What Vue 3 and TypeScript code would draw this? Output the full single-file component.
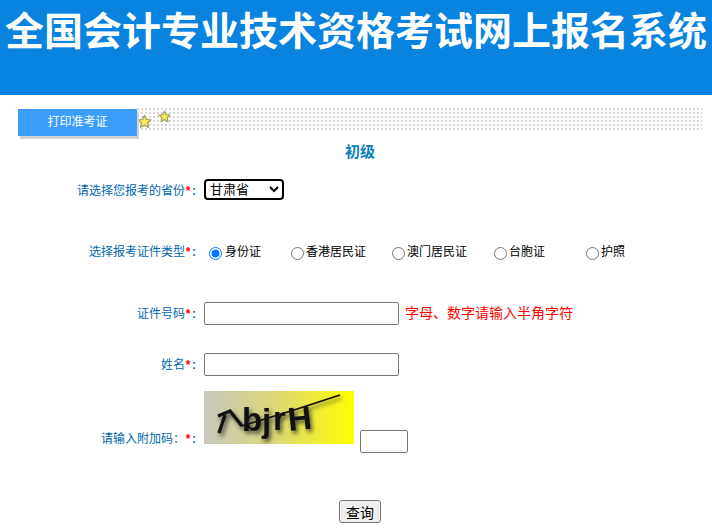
<script setup lang="ts">
import { ref } from 'vue'

const idTypes = [
  { label: '身份证', width: 81 },
  { label: '香港居民证', width: 101 },
  { label: '澳门居民证', width: 102 },
  { label: '台胞证', width: 92 },
  { label: '护照', width: 60 },
]
const idType = ref('身份证')
const province = ref('甘肃省')
</script>

<template>
  <div class="page">
    <header class="banner">
      <h1>全国会计专业技术资格考试网上报名系统</h1>
    </header>

    <nav class="toolbar">
      <div class="tab">打印准考证</div>
      <div class="dots">
        <svg class="star star-a" viewBox="0 0 24 24" width="15" height="15">
          <path d="M12 2l3 6.6 7.2.8-5.300 4.900 1.500 7.100L12 17.800l-6.400 3.600 1.500-7.100L1.800 9.400 9 8.600z" fill="#f9ec55" stroke="#a9a66a" stroke-width="2.200" stroke-linejoin="round" />
        </svg>
        <svg class="star star-b" viewBox="0 0 24 24" width="13" height="13">
          <path d="M12 2l3 6.6 7.2.8-5.300 4.900 1.500 7.100L12 17.800l-6.400 3.600 1.500-7.100L1.800 9.400 9 8.600z" fill="#f9ec55" stroke="#a9a66a" stroke-width="2.500" stroke-linejoin="round" />
        </svg>
      </div>
    </nav>

    <h2 class="level">初级</h2>

    <form class="form" @submit.prevent>
      <div class="row row-province">
        <label class="label">请选择您报考的省份<b>*</b><i>:</i></label>
        <select v-model="province" class="select">
          <option>甘肃省</option>
        </select>
      </div>

      <div class="row row-type">
        <label class="label">选择报考证件类型<b>*</b><i>:</i></label>
        <div class="radios">
          <label v-for="t in idTypes" :key="t.label" class="radio" :style="{ width: t.width + 'px' }">
            <input v-model="idType" type="radio" :value="t.label" />
            <span>{{ t.label }}</span>
          </label>
        </div>
      </div>

      <div class="row row-id">
        <label class="label">证件号码<b>*</b><i>:</i></label>
        <input class="text wide" type="text" />
        <span class="hint">字母、数字请输入半角字符</span>
      </div>

      <div class="row row-name">
        <label class="label">姓名<b>*</b><i>:</i></label>
        <input class="text wide" type="text" />
      </div>

      <div class="row row-code">
        <label class="label code-label">请输入附加码：<b>*</b><i>:</i></label>
        <svg class="captcha" viewBox="0 0 150 53" width="150" height="53" role="img" aria-label="附加码">
          <defs>
            <linearGradient id="cg" x1="0" x2="1" y1="0" y2="0">
              <stop offset="0" stop-color="#c8c8c0" />
              <stop offset="0.5" stop-color="#dcd970" />
              <stop offset="1" stop-color="#ffff00" />
            </linearGradient>
          </defs>
          <rect width="150" height="53" fill="url(#cg)" />
          <g class="cap-ink">
            <text class="cap" x="38 58 69 85" y="40 41 39 40" rotate="0 0 0 -6">bjrH</text>
            <path d="M15 42L21 24M14 25L26 20 38 35" fill="none" stroke="#111" stroke-width="3.400" />
            <path d="M38 35L90 19 136 4" fill="none" stroke="#111" stroke-width="1.800" />
          </g>
        </svg>
        <input class="text code" type="text" />
      </div>

      <div class="row-submit">
        <button class="submit" type="submit">查询</button>
      </div>
    </form>
  </div>
</template>

<style>
html,
body {
  margin: 0;
  background: #fff;
}
</style>

<style scoped>
.page {
  width: 712px;
  height: 530px;
  overflow: hidden;
  font-family: "Liberation Sans", "Noto Sans CJK SC", sans-serif;
  font-size: 12px;
  color: #000;
  position: relative;
}
.banner {
  height: 95px;
  background: #0983e0;
  box-sizing: border-box;
}
.banner h1 {
  margin: 0;
  padding: 5px 0 0 5px;
  font-family: "Noto Sans CJK SC", sans-serif;
  font-size: 39px;
  line-height: 46px;
  font-weight: 700;
  color: #fff;
  white-space: nowrap;
}
.toolbar {
  display: flex;
  margin: 13px 0 0 18px;
  width: 684px;
  height: 31px;
}
.tab {
  width: 119px;
  height: 27px;
  margin-top: 1px;
  background: #3d9dfb;
  color: #fff;
  font-size: 12px;
  line-height: 27px;
  text-align: center;
  box-shadow: 2px 3px 0 #d4d4d4;
  position: relative;
  z-index: 1;
}
.dots {
  flex: 1;
  height: 24px;
  position: relative;
  background-image: radial-gradient(circle at 1px 1px, #d6d6d6 0.7px, transparent 1px);
  background-size: 4px 4px;
}
.star {
  position: absolute;
  display: block;
}
.star-a {
  left: 0;
  top: 6px;
}
.star-b {
  left: 21px;
  top: 2px;
}
.level {
  margin: 3px 0 0;
  padding-left: 8px;
  text-align: center;
  font-size: 15px;
  line-height: 20px;
  font-weight: 700;
  color: #0a7fc0;
}
.row {
  display: flex;
  align-items: center;
}
.label {
  width: 197px;
  flex: none;
  text-align: right;
  color: #0068b3;
  font-size: 12px;
  line-height: 16px;
  white-space: nowrap;
}
.label b {
  color: #f00;
  font-weight: 700;
  display: inline-block;
  width: 6px;
  text-align: center;
}
.label i {
  color: #0068b3;
  font-style: normal;
  font-weight: 700;
  display: inline-block;
  width: 6px;
  text-align: center;
}
.row-province {
  margin-top: 17px;
  height: 21px;
}
.row-province .label {
  padding-top: 2px;
}
.select {
  margin-left: 7px;
  width: 80px;
  height: 21px;
  box-sizing: border-box;
  border: 2px solid #000;
  border-radius: 4px;
  background: #fff;
  font-size: 13px;
  line-height: 15px;
  font-family: "Liberation Sans", "Noto Sans CJK SC", sans-serif;
  padding: 0;
}
.row-type {
  margin-top: 41px;
  height: 21px;
}
.radios {
  display: flex;
  margin-left: 7px;
}
.radio {
  display: flex;
  align-items: center;
  flex: none;
  font-size: 12px;
  white-space: nowrap;
}
.radio input {
  margin: 3px 2px 0 6px;
  width: 13px;
  height: 13px;
}
.radio:first-child input {
  margin: 3px 3px 0 5px;
}
.radio span {
  margin-top: -3px;
}
.row-id {
  margin-top: 40px;
  height: 23px;
}
.text {
  box-sizing: border-box;
  height: 23px;
  border: 1px solid #767676;
  border-radius: 2px;
  background: #fff;
  padding: 1px 2px;
}
.wide {
  margin-left: 7px;
  width: 195px;
}
.hint {
  margin-left: 6px;
  margin-top: -4px;
  font-size: 14px;
  color: #f00;
  white-space: nowrap;
}
.row-name {
  margin-top: 28px;
  height: 23px;
}
.row-code {
  margin-top: 15px;
  height: 62px;
  align-items: flex-end;
  position: relative;
}
.code-label {
  margin-bottom: 6px;
}
.captcha {
  margin-left: 7px;
  margin-bottom: 9px;
  display: block;
  flex: none;
}
.cap-ink {
  filter: drop-shadow(2px 3px 2px rgba(30, 30, 30, 0.75));
}
.cap {
  font-family: "Liberation Sans", sans-serif;
  font-size: 33px;
  font-weight: 700;
  fill: #111;
}
.code {
  margin-left: 6px;
  width: 48px;
}
.row-submit {
  margin-top: 47px;
  padding-left: 8px;
  text-align: center;
}
.submit {
  width: 42px;
  height: 23px;
  padding: 0;
  font-size: 14px;
  font-family: "Noto Sans CJK SC", sans-serif;
  background: #efefef;
  border: 1px solid #767676;
  border-radius: 3px;
  color: #000;
}
</style>
